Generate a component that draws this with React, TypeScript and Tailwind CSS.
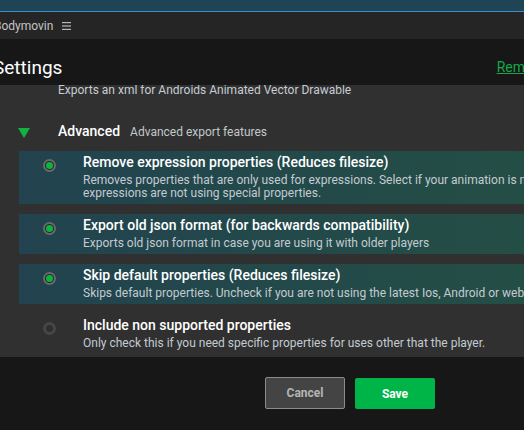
import React from "react";

type Opt = { title: string; desc: string[]; on: boolean };

const opts: Opt[] = [
  {
    title: "Remove expression properties (Reduces filesize)",
    desc: [
      "Removes properties that are only used for expressions. Select if your animation is not using expressions or your",
      "expressions are not using special properties.",
    ],
    on: true,
  },
  {
    title: "Export old json format (for backwards compatibility)",
    desc: ["Exports old json format in case you are using it with older players"],
    on: true,
  },
  {
    title: "Skip default properties (Reduces filesize)",
    desc: ["Skips default properties. Uncheck if you are not using the latest Ios, Android or web players."],
    on: true,
  },
  {
    title: "Include non supported properties",
    desc: ["Only check this if you need specific properties for uses other that the player."],
    on: false,
  },
];

function Radio({ on }: { on: boolean }) {
  if (on) {
    return (
      <div className="w-[13px] h-[13px] rounded-full bg-[#6a6a6a] flex items-center justify-center shrink-0">
        <div className="w-[9px] h-[9px] rounded-full bg-[#1d2b2a] flex items-center justify-center">
          <div className="w-[7px] h-[7px] rounded-full bg-[#10b23f]" />
        </div>
      </div>
    );
  }
  return (
    <div className="w-[13px] h-[13px] rounded-full bg-[#464646] flex items-center justify-center shrink-0">
      <div className="w-[7px] h-[7px] rounded-full bg-[#2f2f2f]" />
    </div>
  );
}

export default function App() {
  return (
    <div
      className="w-[524px] h-[430px] overflow-hidden bg-[#171717] flex flex-col"
      style={{ fontFamily: "Roboto, 'Liberation Sans', sans-serif" }}
    >
      <div className="h-[11px] bg-[#1f4454] shrink-0" />
      <div className="h-[1px] bg-[#3a8cd6] shrink-0" />
      <div className="h-[27px] bg-[#252525] flex items-center shrink-0">
        <span className="ml-[-6px] text-[12px] text-[#c4c4c4] whitespace-nowrap">Bodymovin</span>
        <svg width="9" height="8" viewBox="0 0 9 8" className="ml-[9px]">
          <rect x="0" y="0" width="9" height="1.2" fill="#b8b8b8" />
          <rect x="0" y="3.4" width="9" height="1.2" fill="#b8b8b8" />
          <rect x="0" y="6.8" width="9" height="1.2" fill="#b8b8b8" />
        </svg>
      </div>
      <div className="h-[46px] bg-[#171717] flex items-center justify-between shrink-0 pt-[13px]">
        <span className="ml-[-7px] text-[19px] text-white whitespace-nowrap">Settings</span>
        <span className="mr-[-23px] text-[14px] text-[#16a84a] underline whitespace-nowrap mt-[-2px]">Remove</span>
      </div>
      <div className="h-[272px] bg-[#303030] shrink-0 overflow-hidden">
        <div className="pl-[58px] text-[12px] text-[#c6cdd3] leading-[13px] whitespace-nowrap mt-[-1px]">
          Exports an xml for Androids Animated Vector Drawable
        </div>
        <div className="flex items-center mt-[24px] h-[20px]">
          <svg width="12" height="10" viewBox="0 0 12 10" className="ml-[18px] mt-[4px]">
            <polygon points="0,0 12,0 6,10" fill="#12b23f" />
          </svg>
          <span className="ml-[28px] text-[14px] text-white font-medium">Advanced</span>
          <span className="ml-[10px] text-[12px] text-[#c2c8cc] mt-[1px]">Advanced export features</span>
        </div>
        <div className="flex flex-col gap-[10px] mt-[10px] ml-[19px] w-[640px]">
          {opts.map((o, i) => (
            <div
              key={i}
              className={
                "flex pt-[3px] pb-[4px] " +
                (o.on ? "bg-gradient-to-r from-[#22434f] to-[#245142]" : "")
              }
            >
              <div className="w-[64px] shrink-0 flex justify-start pl-[24px] pt-[5px]">
                <Radio on={o.on} />
              </div>
              <div className="flex-1">
                <div className="text-[14px] font-medium text-white leading-[16px] whitespace-nowrap">{o.title}</div>
                <div className="mt-[4px]">
                  {o.desc.map((d, j) => (
                    <div key={j} className="text-[12px] text-[#c3cbd1] leading-[13px] whitespace-nowrap">
                      {d}
                    </div>
                  ))}
                </div>
              </div>
            </div>
          ))}
        </div>
      </div>
      <div className="flex-1 bg-[#171717] flex justify-start pt-[20px] pl-[265px] gap-[10px]">
        <button className="w-[80px] h-[32px] rounded-[2px] border border-[#8c8c8c] bg-[#444444] text-[#b4b4b4] text-[12px] font-bold">
          Cancel
        </button>
        <button className="w-[80px] h-[31px] mt-[1px] rounded-[2px] bg-[#00b548] text-white text-[12px] font-bold">
          Save
        </button>
      </div>
    </div>
  );
}
